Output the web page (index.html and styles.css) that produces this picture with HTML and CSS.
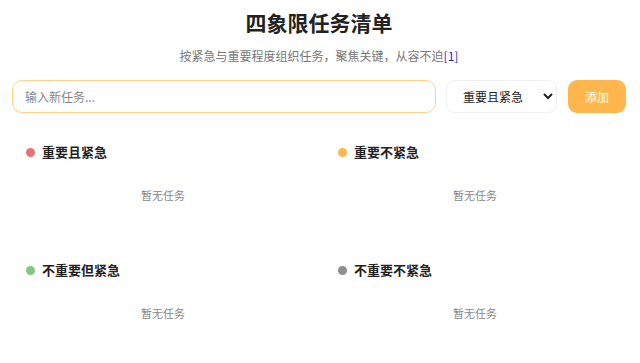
FILE: index.html
```html
<!DOCTYPE html>
<html lang="zh-CN">
<head>
  <meta charset="UTF-8" />
  <meta name="viewport" content="width=device-width, initial-scale=1.0"/>
  <title>四象限任务清单</title>
  <link rel="stylesheet" href="styles.css">
</head>
<body>
  <main class="app">
    <h1 class="title">四象限任务清单</h1>
    <p class="subtitle">按紧急与重要程度组织任务，聚焦关键，从容不迫<a href="#ref-1">[1]</a></p>

    <div class="add-bar">
      <input type="text" class="task-input" placeholder="输入新任务..." />
      <select class="task-type">
        <option>重要且紧急</option>
        <option>重要不紧急</option>
        <option>不重要但紧急</option>
        <option>不重要不紧急</option>
      </select>
      <button class="add-btn">添加</button>
    </div>

    <section class="quadrants">
      <div class="quadrant">
        <h2 class="q-title"><span class="dot dot-red"></span>重要且紧急</h2>
        <p class="empty">暂无任务</p>
      </div>
      <div class="quadrant">
        <h2 class="q-title"><span class="dot dot-orange"></span>重要不紧急</h2>
        <p class="empty">暂无任务</p>
      </div>
      <div class="quadrant">
        <h2 class="q-title"><span class="dot dot-green"></span>不重要但紧急</h2>
        <p class="empty">暂无任务</p>
      </div>
      <div class="quadrant">
        <h2 class="q-title"><span class="dot dot-gray"></span>不重要不紧急</h2>
        <p class="empty">暂无任务</p>
      </div>
    </section>
  </main>
</body>
</html>
```

FILE: styles.css
```css
:root {
  --orange: #ffb74d;
  --orange-light: #ffd28c;
  --text: #222;
  --muted: #888;
}

body {
  margin: 0;
  padding: 0;
  background: #fff;
  color: var(--text);
  font-family: "Noto Sans CJK SC", "Noto Sans", sans-serif;
}

.app {
  padding: 0 14px 0 12px;
}

.title {
  margin: 8px 0 0;
  font-size: 21px;
  line-height: 28px;
  text-align: center;
  font-weight: 700;
}

.subtitle {
  margin: 12px 0 0;
  font-size: 12px;
  line-height: 16px;
  text-align: center;
  color: #777;
}

.subtitle a {
  color: #2a2ad0;
  text-decoration: none;
}

.add-bar {
  display: flex;
  gap: 10px;
  margin-top: 16px;
  height: 33px;
}

.task-input {
  flex: 1;
  box-sizing: border-box;
  height: 33px;
  padding: 0 12px;
  border: 1px solid var(--orange-light);
  border-radius: 10px;
  font-family: inherit;
  font-size: 12px;
  outline: none;
}

.task-input::placeholder {
  color: #888;
}

.task-type {
  box-sizing: border-box;
  width: 111px;
  height: 33px;
  padding: 0 6px 0 12px;
  border: 1px solid #f0f0f0;
  border-radius: 9px;
  background: #fff;
  font-family: inherit;
  font-size: 12px;
  color: var(--text);
}

.add-btn {
  box-sizing: border-box;
  width: 58px;
  height: 33px;
  margin-left: 1px;
  border: none;
  border-radius: 9px;
  background: var(--orange);
  color: #fff;
  font-family: inherit;
  font-size: 12px;
}

.quadrants {
  display: grid;
  grid-template-columns: 1fr 1fr;
  column-gap: 10px;
  row-gap: 10px;
  margin-top: 20px;
}

.quadrant {
  min-height: 108px;
  padding: 10px 14px;
  box-sizing: border-box;
}

.q-title {
  display: flex;
  align-items: center;
  gap: 7px;
  margin: 0;
  font-size: 13px;
  line-height: 18px;
  font-weight: 700;
}

.dot {
  width: 9px;
  height: 9px;
  border-radius: 50%;
}

.dot-red { background: #e57373; }
.dot-orange { background: #ffb74d; }
.dot-green { background: #81c784; }
.dot-gray { background: #8e8e8e; }

.empty {
  margin: 26px 0 0;
  text-align: center;
  font-size: 11px;
  line-height: 16px;
  color: var(--muted);
}
```
